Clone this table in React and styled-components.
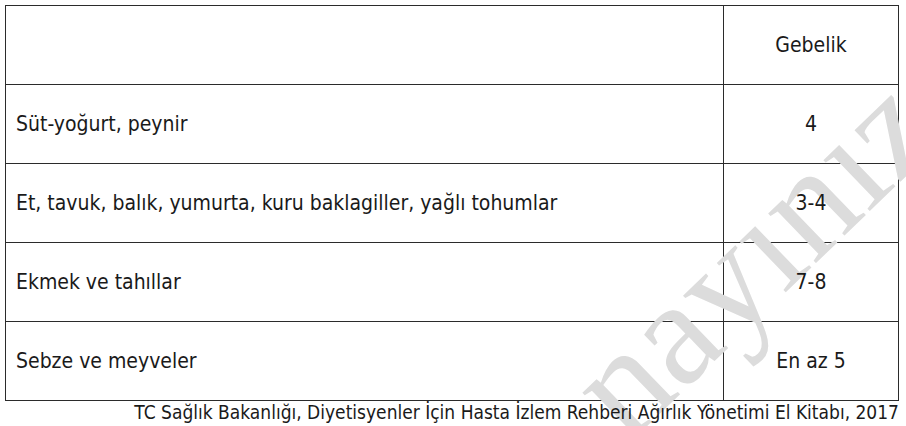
import styled, { createGlobalStyle } from "styled-components";

const GlobalStyle = createGlobalStyle`
  html, body {
    margin: 0;
    padding: 0;
    background: #fff;
    overflow: hidden;
  }
`;

const Page = styled.div`
  position: relative;
  width: 906px;
  height: 426px;
  overflow: hidden;
  padding: 5px 0 0 5px;
  box-sizing: border-box;
  font-family: "DejaVu Sans Condensed", "DejaVu Sans", sans-serif;
  color: #1a1a1a;
`;

const Table = styled.table`
  width: 894px;
  border-collapse: collapse;
  background: transparent;
`;

const Cell = styled.td`
  height: 78px;
  padding: 0 0 0 10px;
  border: 1px solid #2b2b2b;
  font-size: 21px;
  text-align: ${(p) => (p.$center ? "center" : "left")};
  vertical-align: middle;
  ${(p) => p.$center && "width: 174px; padding: 0;"}
`;

/* text sits above the watermark, borders below it */
const Label = styled.span`
  position: relative;
  z-index: 2;
`;

const Caption = styled.div`
  position: relative;
  z-index: 2;
  width: 894px;
  text-align: right;
  font-size: 19px;
  line-height: 22px;
`;

const Watermark = styled.div`
  position: absolute;
  left: 652px;
  top: 298px;
  font-family: "Liberation Serif", "DejaVu Serif", serif;
  font-size: 150px;
  color: #dcdcdc;
  transform: rotate(-44deg);
  transform-origin: left bottom;
  white-space: nowrap;
  pointer-events: none;
  z-index: 1;
`;

const rows = [
  ["Süt-yoğurt, peynir", "4"],
  ["Et, tavuk, balık, yumurta, kuru baklagiller, yağlı tohumlar", "3-4"],
  ["Ekmek ve tahıllar", "7-8"],
  ["Sebze ve meyveler", "En az 5"],
];

export default function App() {
  return (
    <>
      <GlobalStyle />
      <Page>
        <Watermark>nayınız</Watermark>
        <Table>
          <tbody>
            <tr>
              <Cell />
              <Cell $center>
                <Label>Gebelik</Label>
              </Cell>
            </tr>
            {rows.map(([food, count]) => (
              <tr key={food}>
                <Cell>
                  <Label>{food}</Label>
                </Cell>
                <Cell $center>
                  <Label>{count}</Label>
                </Cell>
              </tr>
            ))}
          </tbody>
        </Table>
        <Caption>
          TC Sağlık Bakanlığı, Diyetisyenler İçin Hasta İzlem Rehberi Ağırlık
          Yönetimi El Kitabı, 2017
        </Caption>
      </Page>
    </>
  );
}
